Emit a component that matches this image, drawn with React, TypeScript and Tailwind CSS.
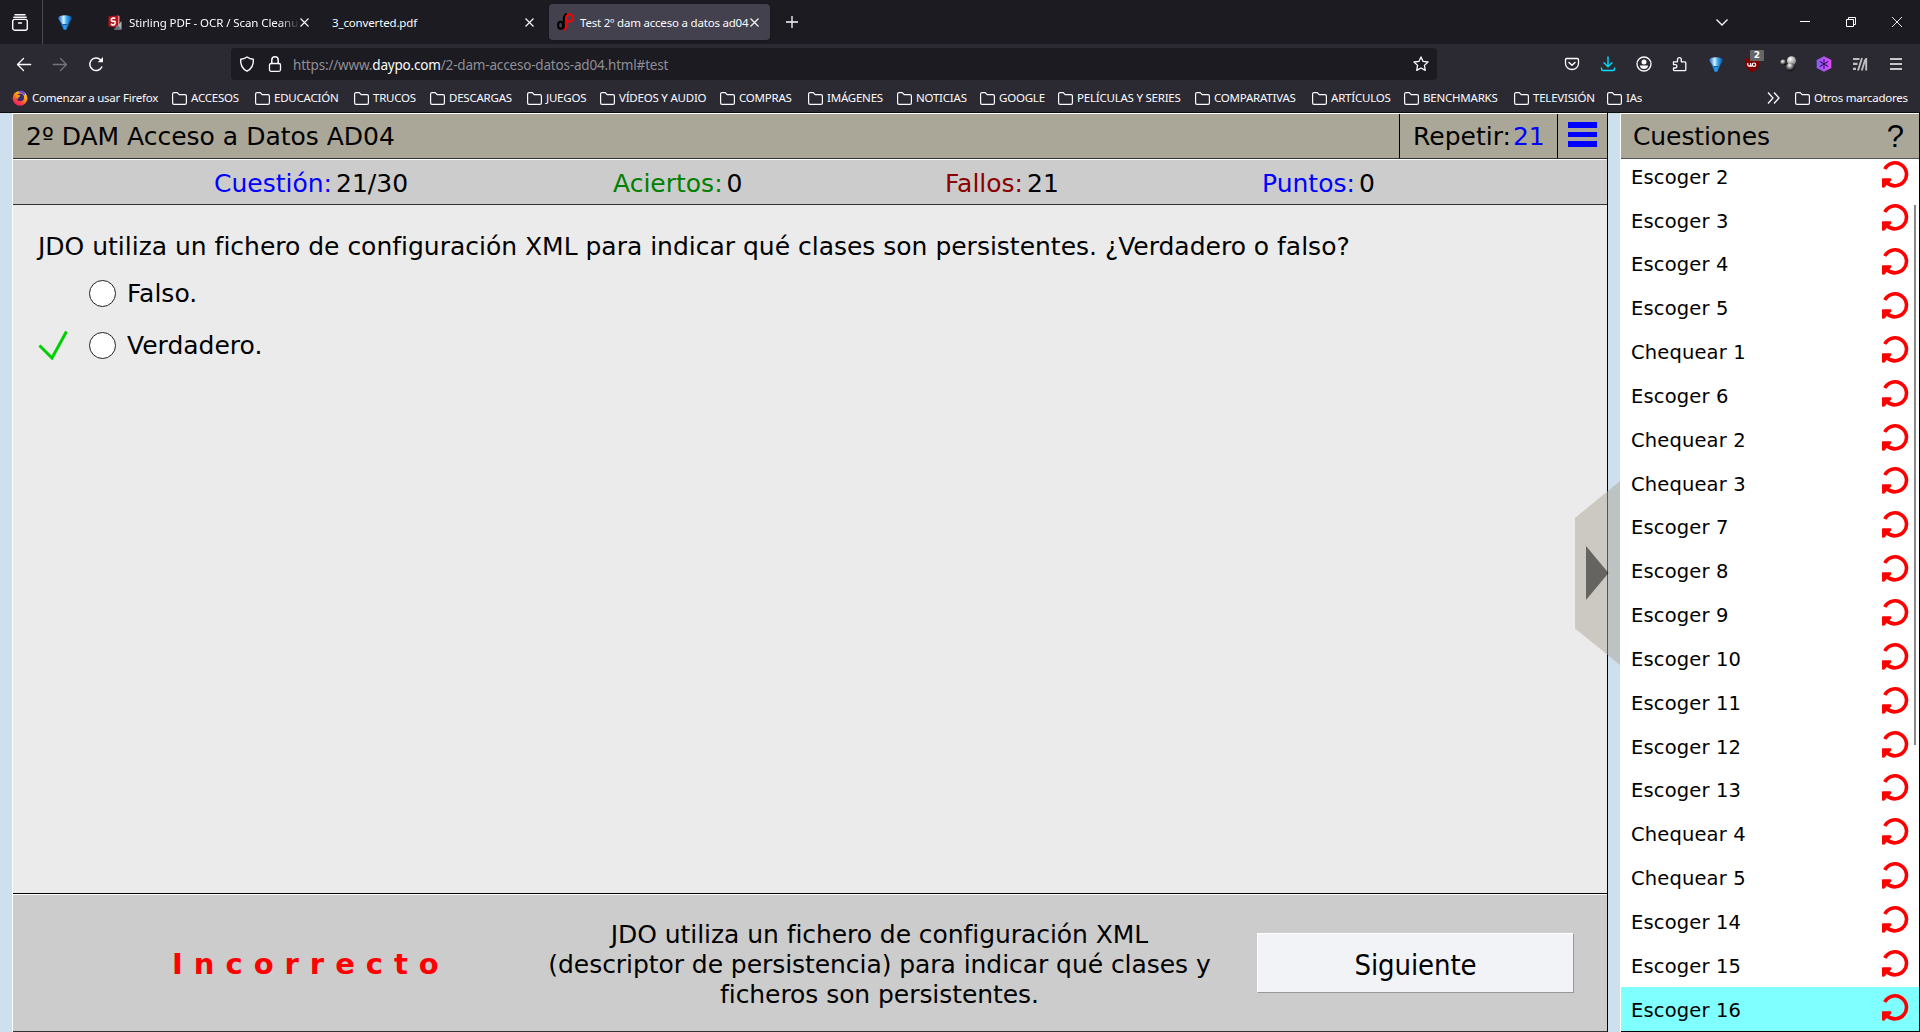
import type { ReactNode } from "react";

type IconProps = { children: ReactNode; className?: string; size?: number };

function Icon({ children, className = "", size = 16 }: IconProps) {
  return (
    <svg
      width={size}
      height={size}
      viewBox="0 0 16 16"
      fill="none"
      stroke="currentColor"
      strokeWidth="1.3"
      strokeLinecap="round"
      strokeLinejoin="round"
      className={`shrink-0 ${className}`}
    >
      {children}
    </svg>
  );
}

function Diamond() {
  return (
    <svg width="14" height="15" viewBox="0 0 14 15" className="shrink-0">
      <defs>
        <linearGradient id="gem" x1="0" x2="1" y1="0" y2="0">
          <stop offset="0" stopColor="#0a5fd0" />
          <stop offset=".4" stopColor="#d8f4ff" />
          <stop offset=".6" stopColor="#3fb2f5" />
          <stop offset="1" stopColor="#0648a0" />
        </linearGradient>
        <linearGradient id="gemDark" x1="0" x2="1" y1="0" y2="0">
          <stop offset="0" stopColor="#0540a8" />
          <stop offset=".5" stopColor="#2aa0f2" />
          <stop offset="1" stopColor="#053a90" />
        </linearGradient>
      </defs>
      <path d="M.3 3.200 5.200 9.500H8.800L13.700 3.200 8.300 14.700H5.700Z" fill="url(#gemDark)" />
      <path d="M.2 2.500Q2 .3 7 .3T13.800 2.500V3.800L9.500 9H4.500L.2 3.800Z" fill="url(#gem)" />
    </svg>
  );
}

function CloseX() {
  return (
    <svg width="9" height="9" viewBox="0 0 9 9" stroke="#fbfbfe" strokeWidth="1.1" className="shrink-0">
      <path d="M.5.5l8 8M8.500.5l-8 8" />
    </svg>
  );
}

function Folder() {
  return (
    <svg width="15" height="13" viewBox="0 0 15 13" fill="none" stroke="#fbfbfe" strokeWidth="1.2" className="shrink-0">
      <path d="M.6 2.100Q.6.6 2 .6H5.200L7.200 2.600H13Q14.400 2.600 14.400 4V11Q14.400 12.400 13 12.400H2Q.6 12.400.6 11Z" />
    </svg>
  );
}

function FirefoxLogo() {
  return (
    <svg width="16" height="16" viewBox="0 0 16 16" className="shrink-0">
      <defs>
        <linearGradient id="fox" x1=".8" y1="0" x2=".2" y2="1">
          <stop offset="0" stopColor="#fff14a" />
          <stop offset=".4" stopColor="#ff980e" />
          <stop offset=".75" stopColor="#ff3647" />
          <stop offset="1" stopColor="#e31587" />
        </linearGradient>
      </defs>
      <circle cx="8" cy="8.300" r="7.400" fill="url(#fox)" />
      <path d="M6 2Q9-.3 12 1.800 13 3 13 5.500 11 3.500 9 3Z" fill="#7542e5" />
      <circle cx="8.200" cy="7.400" r="3.800" fill="#3a2a6e" />
      <path d="M2.500 2.500Q4 4.800 7 4.900 9.200 5.500 7.500 6.800 5.500 7.500 6 9.500 3.500 8.500 2.500 2.500Z" fill="#ff980e" />
    </svg>
  );
}

function TabStrip() {
  return (
    <div className="flex h-11 items-center bg-[#1c1b22] text-[11.5px] text-[#fbfbfe]">
      <div className="flex h-11 w-[43px] items-center border-r border-[#4b4a52] pl-3">
        <svg width="16" height="17" viewBox="0 0 16 17" fill="none" stroke="#fbfbfe" strokeWidth="1.4" strokeLinecap="round">
          <path d="M3 .8h10M1.800 3.200h12.400" />
          <rect x=".7" y="5.400" width="14.600" height="10.800" rx="2" />
          <path d="M6.500 9h3" />
        </svg>
      </div>
      <div className="ml-[15px] w-[50px]">
        <Diamond />
      </div>
      <svg width="15" height="15" viewBox="0 0 15 15" className="shrink-0">
        <path d="M.5 1.500 10 .3V12.800L.5 11.500Z" fill="#b3161b" />
        <path d="M10 .3 11.500 1.200V7L10 12.800Z" fill="#e9898c" />
        <path d="M7.300 3.300Q3.300 2.500 3.300 4.600T5.600 6.300 7 8.600 3 9" fill="none" stroke="#fff" strokeWidth="1.600" />
        <path d="M6 14.500 13.500 6V14.500Z" fill="#a8b3b8" />
        <path d="M6 14.500 10 10.500 13.500 14.500Z" fill="#64747b" />
      </svg>
      <div className="ml-[6px] w-[171px] pt-px whitespace-nowrap tracking-[-0.08px] [mask-image:linear-gradient(to_right,black_150px,transparent_171px)]">
        Stirling PDF - OCR / Scan Cleanu
      </div>
      <CloseX />
      <div className="ml-[23px] w-[193px] pt-px tracking-[-0.15px]">3_converted.pdf</div>
      <CloseX />
      <div className="ml-[15px] flex h-9 w-[221px] items-center rounded bg-[#42414d] pl-2 shadow">
        <svg width="17" height="18" viewBox="0 0 17 18" fill="none" className="shrink-0">
          <ellipse cx="3.600" cy="12.300" rx="2.500" ry="3.500" stroke="#000" strokeWidth="2" />
          <path d="M6.800 16.500V6Q7 1.500 10 1" stroke="#000" strokeWidth="2" />
          <ellipse cx="12.500" cy="5" rx="3.300" ry="3.800" stroke="#f00" strokeWidth="2" />
          <path d="M9.200 5V13Q9 16 6.800 17" stroke="#f00" strokeWidth="2" />
        </svg>
        <div className="ml-[6px] w-[170px] pt-px whitespace-nowrap tracking-[-0.2px]">Test 2º dam acceso a datos ad04</div>
        <CloseX />
      </div>
      <svg width="12" height="12" viewBox="0 0 12 12" stroke="#fbfbfe" strokeWidth="1.300" className="ml-4">
        <path d="M6 0v12M0 6h12" />
      </svg>
      <div className="flex-1" />
      <svg width="12" height="7" viewBox="0 0 12 7" fill="none" stroke="#fbfbfe" strokeWidth="1.300">
        <path d="M.5.5 6 6 11.500.5" />
      </svg>
      <svg width="10" height="10" viewBox="0 0 10 10" stroke="#fff" className="ml-[72px]">
        <path d="M0 4.500h10" />
      </svg>
      <svg width="10" height="10" viewBox="0 0 10 10" fill="none" stroke="#fff" className="ml-9">
        <path d="M.5 2.500h7v7h-7zM2.500 2.500v-2h7v7h-2" />
      </svg>
      <svg width="10" height="10" viewBox="0 0 10 10" stroke="#fff" strokeWidth=".9" className="mr-[18px] ml-9">
        <path d="M0 0l10 10M10 0L0 10" />
      </svg>
    </div>
  );
}

function Extensions() {
  return (
    <div className="ml-auto flex items-center gap-5 pr-4 text-[#fbfbfe]">
      <Icon>
        <path d="M2.800 2.500h10.400q1.300 0 1.300 1.300V7.500a6.500 6 0 0 1-13 0V3.800q0-1.300 1.300-1.300Z" />
        <path d="M5 6.500 8 9.300l3-2.800" strokeWidth="1.500" />
      </Icon>
      <Icon className="text-[#00ddff]">
        <path d="M8 1v9.500M4 6.800l4 4 4-4M1.500 12v1q0 1.500 1.500 1.500h10q1.500 0 1.500-1.500v-1" strokeWidth="1.400" />
      </Icon>
      <Icon>
        <circle cx="8" cy="8" r="7" />
        <circle cx="8" cy="6" r="2.500" fill="currentColor" stroke="none" />
        <path d="M3.800 9.500h8.400Q11.500 13 8 13T3.800 9.500Z" fill="currentColor" stroke="none" />
      </Icon>
      <Icon>
        <path d="M1.500 5.800h4V3.500a1.900 1.900 0 0 1 3.800 0V5.800h3.500q1 0 1 1V13.700q0 1-1 1H2.500q-1 0-1-1V12h1.800a1.600 1.600 0 0 0 0-3.300H1.500Z" />
      </Icon>
      <div className="flex w-4 justify-center"><Diamond /></div>
      <div className="relative h-4 w-4">
        <svg width="16" height="17" viewBox="0 0 16 17" className="block">
          <path d="M8 1 15 3V8Q14 13.500 8 16.500 2 13.500 1 8V3Z" fill="#800000" />
          <path d="M3.800 7v1.800q0 1.400 1.400 1.400T6.600 8.800V7M6.600 8.800q0 1.400 1.600 1.400" fill="none" stroke="#fff" strokeWidth="1.200" />
          <circle cx="10" cy="8.700" r="1.700" fill="none" stroke="#fff" strokeWidth="1.200" />
        </svg>
        <div className="absolute -top-[6px] left-[6px] h-[11px] w-[14px] rounded-[1px] bg-[#666] text-center font-['DejaVu_Sans',sans-serif] text-[9px] leading-[11px] font-bold text-white">
          2
        </div>
      </div>
      <svg width="16" height="16" viewBox="0 0 16 16" className="shrink-0">
        <defs>
          <radialGradient id="ball" cx=".35" cy=".3" r=".7">
            <stop offset="0" stopColor="#fff" />
            <stop offset="1" stopColor="#888" />
          </radialGradient>
          <radialGradient id="ballDark" cx=".4" cy=".3" r=".7">
            <stop offset="0" stopColor="#fff" />
            <stop offset=".9" stopColor="#111" />
          </radialGradient>
        </defs>
        <circle cx="11.500" cy="4.800" r="4.500" fill="url(#ball)" />
        <circle cx="3.200" cy="6.500" r="3" fill="url(#ballDark)" />
        <circle cx="10.500" cy="11" r="4.300" fill="url(#ballDark)" />
      </svg>
      <svg width="16" height="16" viewBox="0 0 16 16" className="shrink-0">
        <defs>
          <linearGradient id="hex" x1="0" x2="1" y1="0" y2="0">
            <stop offset="0" stopColor="#8b5cf6" />
            <stop offset="1" stopColor="#e04bf5" />
          </linearGradient>
        </defs>
        <path d="M8 .2 15.300 4.100V11.900L8 15.800.7 11.900V4.100Z" fill="url(#hex)" />
        <path d="M8 3v10M3.800 5.500l8.400 5M12.200 5.500l-8.400 5" stroke="#321a70" strokeWidth="1.100" />
      </svg>
      <svg width="16" height="16" viewBox="0 0 16 16" stroke="#bdbdc2" className="shrink-0">
        <path d="M1 3h6.500M1 7.800h4.500M1 12.800h3" strokeWidth="2.200" />
        <path d="M10 2 6 14.500M14.200 2v12.500M13.200 3.500 9.800 14.500" strokeWidth="1.900" />
      </svg>
      <Icon>
        <path d="M2 3h12M2 8h12M2 13h12" strokeLinecap="butt" />
      </Icon>
    </div>
  );
}

function Toolbar() {
  return (
    <div className="flex h-9 items-end bg-[#2b2a33]">
      <div className="flex h-8 w-[231px] items-center gap-5 pl-4 text-[#fbfbfe]">
        <Icon><path d="M14.700 8.500H1.500M7.500 2.500l-6 6 6 6" /></Icon>
        <Icon className="text-[#75747c]"><path d="M1.300 8.500h13.200M8.500 2.500l6 6-6 6" /></Icon>
        <Icon>
          <path d="M13.800 11a6.300 6.300 0 1 1-1.300-7.300" strokeWidth="1.500" />
          <path d="M15 1v5.300H9.700Z" fill="currentColor" stroke="none" />
        </Icon>
      </div>
      <div className="flex h-8 w-[1206px] items-center rounded bg-[#1c1b22] text-[#fbfbfe]">
        <Icon className="ml-2">
          <path d="M8 1Q11 3 14.300 3.200 15 11.500 8 15.200 1 11.500 1.700 3.200 5 3 8 1Z" strokeWidth="1.400" />
        </Icon>
        <Icon className="ml-3">
          <rect x="2.500" y="7.500" width="11" height="7.800" rx="1.500" />
          <path d="M4.800 7.500V4a3.200 3.200 0 0 1 6.400 0V7.500" strokeWidth="1.500" />
        </Icon>
        <div className="ml-[10px] flex-1 pt-[3px] text-[13.5px] tracking-[-0.18px] text-[#8f8e96]">
          https://www.<span className="text-[#fbfbfe]">daypo.com</span>/2-dam-acceso-datos-ad04.html#test
        </div>
        <Icon className="mr-2">
          <path d="M8 .9 10.100 5.400 15 6 11.400 9.400 12.300 14.400 8 12 3.700 14.400 4.600 9.400 1 6 5.900 5.400Z" />
        </Icon>
      </div>
      <div className="flex h-8 flex-1 items-center"><Extensions /></div>
    </div>
  );
}

function Bookmarks() {
  const cell = "flex items-center gap-1 whitespace-nowrap shrink-0";
  return (
    <div className="flex h-8 items-center bg-[#2b2a33] pt-1 pl-3 text-[11.5px] tracking-[-0.22px] text-[#fbfbfe]">
      <div className={`${cell} w-[160px]`}><FirefoxLogo />Comenzar a usar Firefox</div>
      <div className={`${cell} w-[83px]`}><Folder />ACCESOS</div>
      <div className={`${cell} w-[99px]`}><Folder />EDUCACIÓN</div>
      <div className={`${cell} w-[76px]`}><Folder />TRUCOS</div>
      <div className={`${cell} w-[97px]`}><Folder />DESCARGAS</div>
      <div className={`${cell} w-[73px]`}><Folder />JUEGOS</div>
      <div className={`${cell} w-[120px]`}><Folder />VÍDEOS Y AUDIO</div>
      <div className={`${cell} w-[88px]`}><Folder />COMPRAS</div>
      <div className={`${cell} w-[89px]`}><Folder />IMÁGENES</div>
      <div className={`${cell} w-[83px]`}><Folder />NOTICIAS</div>
      <div className={`${cell} w-[78px]`}><Folder />GOOGLE</div>
      <div className={`${cell} w-[137px]`}><Folder />PELÍCULAS Y SERIES</div>
      <div className={`${cell} w-[117px]`}><Folder />COMPARATIVAS</div>
      <div className={`${cell} w-[92px]`}><Folder />ARTÍCULOS</div>
      <div className={`${cell} w-[110px]`}><Folder />BENCHMARKS</div>
      <div className={`${cell} w-[93px]`}><Folder />TELEVISIÓN</div>
      <div className={`${cell} w-[160px]`}><Folder />IAs</div>
      <svg width="13" height="12" viewBox="0 0 13 12" fill="none" stroke="#fbfbfe" strokeWidth="1.300" className="mr-[15px] shrink-0">
        <path d="M1 .5 6 6 1 11.500M7 .5 12 6 7 11.500" />
      </svg>
      <div className={cell}><Folder />Otros marcadores</div>
    </div>
  );
}

type StatProps = { label: string; value: string; color: string; width: string };

function Stat({ label, value, color, width }: StatProps) {
  return (
    <div className={`flex gap-[4px] ${width}`}>
      <span className={color}>{label}</span>
      <span>{value}</span>
    </div>
  );
}

function Option({ label, correct }: { label: string; correct?: boolean }) {
  return (
    <div className="flex h-[51.5px] items-center">
      <div className="w-[51px]">
        {correct && (
          <svg width="31" height="30" viewBox="0 0 31 30" fill="none" stroke="#00d000" strokeWidth="3">
            <path d="M1.500 15.500 14 28 28.500 1.500" />
          </svg>
        )}
      </div>
      <div className="h-[27px] w-[27px] rounded-full border-[1.5px] border-[#222] bg-white" />
      <div className="ml-[11px]">{label}</div>
    </div>
  );
}

function Quiz() {
  return (
    <main className="flex w-[1596px] flex-col border-r border-l border-r-black border-l-white bg-[#ebebeb] text-[25px] text-black">
      <header className="flex h-[46px] border-t border-b border-t-white border-b-[#333] bg-[#aba798]">
        <div className="flex flex-1 items-center pt-[2px] pl-[13px]">2º DAM Acceso a Datos AD04</div>
        <div className="flex w-[158px] items-center border-l border-black pt-[2px] pl-[13px]">
          Repetir:<span className="ml-[2px] text-[#0000ff]">21</span>
        </div>
        <div className="flex w-[50px] flex-col gap-[4px] border-l border-black pt-2 pl-[10px]">
          <div className="h-[5.5px] w-[29px] bg-[#0000ff]" />
          <div className="h-[5.5px] w-[29px] bg-[#0000ff]" />
          <div className="h-[5.5px] w-[29px] bg-[#0000ff]" />
        </div>
      </header>
      <div className="flex h-[46px] items-center border-t border-b border-t-white border-b-[#333] bg-[#cccccc] pt-[3px] pl-[201px]">
        <Stat label="Cuestión:" value="21/30" color="text-[#0000ff]" width="w-[399px]" />
        <Stat label="Aciertos:" value="0" color="text-[#008000]" width="w-[332px]" />
        <Stat label="Fallos:" value="21" color="text-[#8b0000]" width="w-[317px]" />
        <Stat label="Puntos:" value="0" color="text-[#0000ff]" width="w-[200px]" />
      </div>
      <section className="flex-1 pt-[25px] pl-[25px]">
        <div className="h-[38px] leading-[33px] tracking-[-0.01px] whitespace-nowrap">
          JDO utiliza un fichero de configuración XML para indicar qué clases son persistentes. ¿Verdadero o falso?
        </div>
        <Option label="Falso." />
        <Option label="Verdadero." correct />
      </section>
      <footer className="flex h-[139px] border-t border-b border-t-black border-b-[#333] bg-[#cccccc]">
        <div className="flex w-full items-center border-t border-white">
          <div className="w-[520px] pt-[4px] pl-[159px] text-[29px] font-bold tracking-[11px] text-[#ff0000]">Incorrecto</div>
          <div className="w-[693px] pt-[3px] text-center leading-[30px] tracking-[-0.06px]">
            JDO utiliza un fichero de configuración XML
            <br />
            (descriptor de persistencia) para indicar qué clases y
            <br />
            ficheros son persistentes.
          </div>
          <button className="ml-[31px] flex h-[60px] w-[317px] items-center justify-center border border-t-white border-r-[#999] border-b-[#999] border-l-white bg-[#f1f3f7] pt-[5px] font-['DejaVu_Sans_Condensed','DejaVu_Sans',sans-serif] text-[29px] tracking-[-0.1px]">
            Siguiente
          </button>
        </div>
      </footer>
    </main>
  );
}

const questions = [
  "Escoger 2", "Escoger 3", "Escoger 4", "Escoger 5", "Chequear 1", "Escoger 6", "Chequear 2",
  "Chequear 3", "Escoger 7", "Escoger 8", "Escoger 9", "Escoger 10", "Escoger 11", "Escoger 12",
  "Escoger 13", "Chequear 4", "Chequear 5", "Escoger 14", "Escoger 15", "Escoger 16",
];

function QuestionRow({ label, active }: { label: string; active: boolean }) {
  return (
    <div className={`flex h-[43.85px] shrink-0 items-center justify-between pr-[10px] pl-[10px] ${active ? "bg-[#7fffff]" : ""}`}>
      <span className="pt-[2.5px] tracking-[0.15px]">{label}</span>
      <svg width="27" height="27" viewBox="0 0 27 27" fill="none" className="mb-[4px]">
        <path d="M2.800 8A11.500 11.500 0 1 1 5 21.600" stroke="#f00" strokeWidth="3.600" />
        <path d="M0 18Q0 17.300.8 17.300H8.500Q9.300 17.300 9.300 18V19.500L6.500 22 2.500 26.500Q0 27 0 26Z" fill="#f00" />
      </svg>
    </div>
  );
}

function Sidebar() {
  return (
    <aside className="flex w-[300px] flex-col border-r border-l border-r-black border-l-white bg-white text-black">
      <header className="flex h-[46px] shrink-0 items-center justify-between border-t border-b border-t-white border-b-[#555] bg-[#aba798] pr-[15px] pl-[12px] text-[25px]">
        <span className="pt-[2px] tracking-[-0.1px]">Cuestiones</span>
        <span className="font-['Liberation_Sans',sans-serif] text-[31px] leading-none">?</span>
      </header>
      <div className="relative flex flex-1 flex-col justify-end overflow-hidden border-b border-black text-[19.5px]">
        {questions.map((q) => (
          <QuestionRow key={q} label={q} active={q === "Escoger 16"} />
        ))}
        <div className="absolute top-[46px] right-[3px] h-[540px] w-[2px] bg-[#888]" />
      </div>
    </aside>
  );
}

export default function App() {
  return (
    <div className="flex h-[1032px] w-[1920px] flex-col overflow-hidden">
      <div className="border-b border-[#0c0c0d] font-['Noto_Sans',sans-serif]">
        <TabStrip />
        <Toolbar />
        <Bookmarks />
      </div>
      <div className="relative flex min-h-0 flex-1 justify-between bg-[#cedfee] pl-3 font-['DejaVu_Sans',sans-serif]">
        <Quiz />
        <Sidebar />
        <svg width="45" height="184" viewBox="0 0 45 184" className="absolute top-[368px] left-[1575px]">
          <path d="M0 37 45 0V184L0 147.500Z" fill="rgb(171,167,152)" fillOpacity=".5" />
          <path d="M11 65 33.500 92 11 119Z" fill="#000" fillOpacity=".5" />
        </svg>
      </div>
    </div>
  );
}
